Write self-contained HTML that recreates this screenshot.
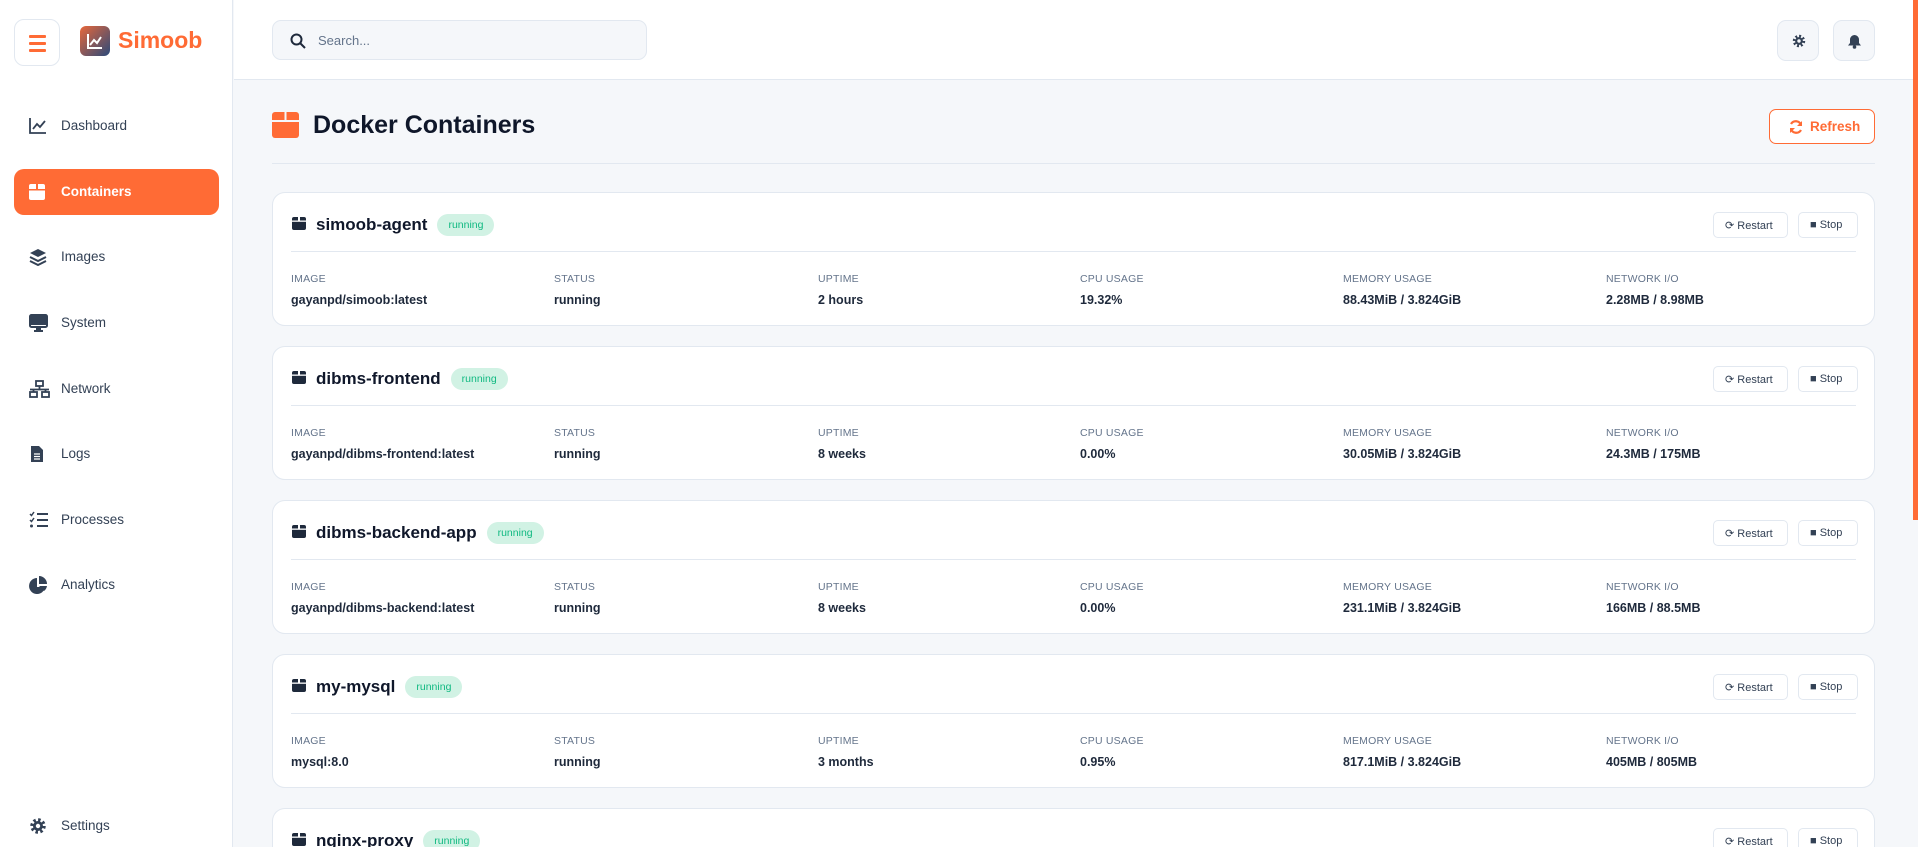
<!DOCTYPE html>
<html><head><meta charset="utf-8"><style>
*{box-sizing:border-box;margin:0;padding:0}
html{width:1918px;height:847px;overflow:hidden}
body{width:1918px;height:847px;overflow:hidden;background:#f5f7fa;font-family:"Liberation Sans",sans-serif;color:#1e293b;position:relative}
.side{position:absolute;left:0;top:0;width:233px;height:847px;background:#fff;border-right:1px solid #e2e8f0}
.ham{position:absolute;left:14px;top:19px;width:46px;height:47px;border:1px solid #e2e8f0;border-radius:10px;background:#fff}
.ham i{position:absolute;left:14px;width:17px;height:3px;background:#ff6b35;border-radius:1px}
.logo{position:absolute;left:80px;top:26px;width:30px;height:30px;border-radius:6px;background:linear-gradient(135deg,#e8673a,#2b4a7a)}
.brand{position:absolute;left:118px;top:27px;font-size:23px;font-weight:bold;color:#ff6b35}
.nav{position:absolute;left:14px;width:205px;height:46px;border-radius:10px;font-size:13.5px;color:#334155}
.nav svg{position:absolute;left:15px;top:14px}
.nav span{position:absolute;left:47px;top:15px}
.nav.act{background:#ff6b35;color:#fff;font-weight:bold}
.top{position:absolute;left:234px;top:0;right:5px;height:80px;background:#fff;border-bottom:1px solid #e2e8f0}
.search{position:absolute;left:272px;top:20px;width:375px;height:40px;border:1px solid #e2e8f0;border-radius:9px;background:#f5f7fa;font-size:13px;color:#64748b}
.ib{position:absolute;top:20px;width:42px;height:41px;border:1px solid #e2e8f0;border-radius:9px;background:#f5f7fa}
.bar{position:absolute;right:0;top:0;width:5px;height:520px;background:#ff6b35}
h1{position:absolute;left:313px;top:111px;font-size:25px;font-weight:bold;color:#0f172a}
.refresh{position:absolute;left:1769px;top:109px;width:106px;height:35px;border:1px solid #ff6b35;border-radius:7px;color:#ff6b35;font-size:13.5px;font-weight:bold;background:#fff}
.hr{position:absolute;left:272px;width:1603px;top:163px;height:1px;background:#e2e8f0}
.card{position:absolute;left:272px;width:1603px;height:134px;background:#fff;border:1px solid #e2e8f0;border-radius:13px}
.card .ci{position:absolute;left:19px;top:23px}
.card .nm{position:absolute;left:43px;top:21px;font-size:17px;font-weight:bold;color:#0f172a}
.badge{display:inline-block;margin-left:10px;background:#d1f2e4;color:#10b981;font-size:10.5px;font-weight:normal;padding:5px 11px;border-radius:12px;vertical-align:2px}
.btn{position:absolute;top:19px;height:26px;border:1px solid #e2e8f0;border-radius:5px;font-size:11px;color:#334155;background:#fff;padding:6px 0 0 11px}
.card .dv{position:absolute;left:18px;right:18px;top:58px;height:1px;background:#e2e8f0}
.col{position:absolute;top:80px}
.col .l{font-size:10.5px;color:#64748b;letter-spacing:.2px}
.col .v{font-size:12.5px;font-weight:bold;color:#1e293b;margin-top:8px}
</style></head><body>
<div class="side">
 <div class="ham"><i style="top:15px"></i><i style="top:22px"></i><i style="top:29px"></i></div>
 <div class="logo"><svg width="30" height="30" viewBox="0 0 30 30"><path d="M8 8v14h14" fill="none" stroke="#fff" stroke-width="2"/><path d="M10 19l4-5 3 3 4-6" fill="none" stroke="#fff" stroke-width="2"/></svg></div>
 <div class="brand">Simoob</div>
 <div class="nav" style="top:103px"><svg width="18" height="17" viewBox="0 0 18 17"><path d="M1 1v15h16" fill="none" stroke="#334155" stroke-width="1.8"/><path d="M4 12l4-5 3 3 5-6" fill="none" stroke="#334155" stroke-width="1.8"/></svg><span>Dashboard</span></div>
 <div class="nav act" style="top:169px"><svg width="16" height="18" viewBox="0 0 16 18"><rect x="0" y="1" width="16" height="16" rx="2" fill="#fff"/><rect x="7" y="0" width="2" height="7" fill="#ff6b35"/><rect x="0" y="6" width="16" height="1.5" fill="#ff6b35"/></svg><span>Containers</span></div>
 <div class="nav" style="top:234px"><svg width="18" height="18" viewBox="0 0 18 18"><path d="M9 1l8 4-8 4-8-4z" fill="#334155"/><path d="M1 9l8 4 8-4M1 13l8 4 8-4" fill="none" stroke="#334155" stroke-width="2"/></svg><span>Images</span></div>
 <div class="nav" style="top:300px"><svg width="19" height="18" viewBox="0 0 19 18"><rect x="1" y="1" width="17" height="12" rx="1.5" fill="none" stroke="#334155" stroke-width="2"/><rect x="2" y="2" width="15" height="9" fill="#334155"/><rect x="7" y="14" width="5" height="2" fill="#334155"/><rect x="5" y="16" width="9" height="2" fill="#334155"/></svg><span>System</span></div>
 <div class="nav" style="top:366px"><svg width="21" height="18" viewBox="0 0 21 18"><g fill="none" stroke="#334155" stroke-width="1.8"><rect x="7" y="1" width="7" height="5"/><rect x="1" y="12" width="7" height="5"/><rect x="13" y="12" width="7" height="5"/><path d="M10.5 6v3M1 9.5h19M4.5 9.5v2.5M16.5 9.5v2.5"/></g></svg><span>Network</span></div>
 <div class="nav" style="top:431px"><svg width="16" height="18" viewBox="0 0 16 18"><path d="M2 1h8l4 4v12H2z" fill="#334155"/><path d="M5 9h6M5 11.5h6M5 14h6" stroke="#fff" stroke-width="1.2"/></svg><span>Logs</span></div>
 <div class="nav" style="top:497px"><svg width="20" height="18" viewBox="0 0 20 18"><path d="M1 3l1.5 1.5L5 1M1 9l1.5 1.5L5 7" fill="none" stroke="#334155" stroke-width="1.5"/><circle cx="2.5" cy="15" r="1.5" fill="#334155"/><path d="M8 3h11M8 9h11M8 15h11" stroke="#334155" stroke-width="2"/></svg><span>Processes</span></div>
 <div class="nav" style="top:562px"><svg width="19" height="18" viewBox="0 0 19 18"><path d="M8 2a8 8 0 1 0 8 9H8z" fill="#334155"/><path d="M10 0a8 8 0 0 1 8 8h-8z" fill="#334155"/><path d="M10 10h8a8 8 0 0 1-3 5z" fill="#334155"/></svg><span>Analytics</span></div>
 <div class="nav" style="top:803px"><svg width="18" height="18" viewBox="0 0 18 18"><circle cx="9" cy="9" r="6" fill="none" stroke="#334155" stroke-width="3.5" stroke-dasharray="2.4 2.3"/><circle cx="9" cy="9" r="5" fill="#334155"/><circle cx="9" cy="9" r="2.2" fill="#fff"/></svg><span>Settings</span></div>
</div>
<div class="top"></div>
<div class="search"><svg style="position:absolute;left:17px;top:12px" width="16" height="16" viewBox="0 0 16 16"><circle cx="6.5" cy="6.5" r="5" fill="none" stroke="#1e293b" stroke-width="2"/><path d="M10 10l5 5" stroke="#1e293b" stroke-width="2"/></svg><span style="position:absolute;left:45px;top:12px">Search...</span></div>
<div class="ib" style="left:1777px"><svg style="position:absolute;left:14px;top:13px" width="14" height="14" viewBox="0 0 18 18"><circle cx="9" cy="9" r="6" fill="none" stroke="#334155" stroke-width="4" stroke-dasharray="2.4 2.3"/><circle cx="9" cy="9" r="5" fill="#334155"/><circle cx="9" cy="9" r="2.2" fill="#f5f7fa"/></svg></div>
<div class="ib" style="left:1833px"><svg style="position:absolute;left:14px;top:13px" width="13" height="15" viewBox="0 0 13 15"><path d="M6.5 1a4.5 4.5 0 0 0-4.5 4.5V9L0 11.5h13L11 9V5.5A4.5 4.5 0 0 0 6.5 1z" fill="#334155"/><circle cx="6.5" cy="13" r="1.8" fill="#334155"/></svg></div>
<div class="bar"></div>
<svg style="position:absolute;left:272px;top:112px" width="27" height="26" viewBox="0 0 27 26"><rect x="0" y="0" width="27" height="26" rx="3" fill="#ff6b35"/><rect x="12.5" y="0" width="2" height="9" fill="#f5f7fa"/><rect x="0" y="8" width="27" height="2" fill="#f5f7fa"/></svg>
<h1>Docker Containers</h1>
<div class="refresh"><svg style="position:absolute;left:19px;top:10px" width="14" height="14" viewBox="0 0 14 14"><path d="M12 5A5.5 5.5 0 0 0 2 4M2 9a5.5 5.5 0 0 0 10 1" fill="none" stroke="#ff6b35" stroke-width="2.2"/><path d="M13 1v5H8zM1 13V8h5z" fill="#ff6b35"/></svg><span style="position:absolute;left:40px;top:9px">Refresh</span></div>
<div class="hr"></div>

<div class="card" style="top:192px">
<svg class="ci" width="14" height="14" viewBox="0 0 14 14"><rect y="1" width="14" height="13" rx="2" fill="#1e293b"/><rect x="6" width="2" height="5" fill="#fff"/><rect y="4.5" width="14" height="1.3" fill="#fff"/></svg>
<div class="nm">simoob-agent<span class="badge">running</span></div>
<div class="btn" style="left:1440px;width:75px">&#10227; Restart</div><div class="btn" style="left:1525px;width:60px">&#9632; Stop</div>
<div class="dv"></div>
<div class="col" style="left:18px"><div class="l">IMAGE</div><div class="v">gayanpd/simoob:latest</div></div>
<div class="col" style="left:281px"><div class="l">STATUS</div><div class="v">running</div></div>
<div class="col" style="left:545px"><div class="l">UPTIME</div><div class="v">2 hours</div></div>
<div class="col" style="left:807px"><div class="l">CPU USAGE</div><div class="v">19.32%</div></div>
<div class="col" style="left:1070px"><div class="l">MEMORY USAGE</div><div class="v">88.43MiB / 3.824GiB</div></div>
<div class="col" style="left:1333px"><div class="l">NETWORK I/O</div><div class="v">2.28MB / 8.98MB</div></div>
</div>

<div class="card" style="top:346px">
<svg class="ci" width="14" height="14" viewBox="0 0 14 14"><rect y="1" width="14" height="13" rx="2" fill="#1e293b"/><rect x="6" width="2" height="5" fill="#fff"/><rect y="4.5" width="14" height="1.3" fill="#fff"/></svg>
<div class="nm">dibms-frontend<span class="badge">running</span></div>
<div class="btn" style="left:1440px;width:75px">&#10227; Restart</div><div class="btn" style="left:1525px;width:60px">&#9632; Stop</div>
<div class="dv"></div>
<div class="col" style="left:18px"><div class="l">IMAGE</div><div class="v">gayanpd/dibms-frontend:latest</div></div>
<div class="col" style="left:281px"><div class="l">STATUS</div><div class="v">running</div></div>
<div class="col" style="left:545px"><div class="l">UPTIME</div><div class="v">8 weeks</div></div>
<div class="col" style="left:807px"><div class="l">CPU USAGE</div><div class="v">0.00%</div></div>
<div class="col" style="left:1070px"><div class="l">MEMORY USAGE</div><div class="v">30.05MiB / 3.824GiB</div></div>
<div class="col" style="left:1333px"><div class="l">NETWORK I/O</div><div class="v">24.3MB / 175MB</div></div>
</div>

<div class="card" style="top:500px">
<svg class="ci" width="14" height="14" viewBox="0 0 14 14"><rect y="1" width="14" height="13" rx="2" fill="#1e293b"/><rect x="6" width="2" height="5" fill="#fff"/><rect y="4.5" width="14" height="1.3" fill="#fff"/></svg>
<div class="nm">dibms-backend-app<span class="badge">running</span></div>
<div class="btn" style="left:1440px;width:75px">&#10227; Restart</div><div class="btn" style="left:1525px;width:60px">&#9632; Stop</div>
<div class="dv"></div>
<div class="col" style="left:18px"><div class="l">IMAGE</div><div class="v">gayanpd/dibms-backend:latest</div></div>
<div class="col" style="left:281px"><div class="l">STATUS</div><div class="v">running</div></div>
<div class="col" style="left:545px"><div class="l">UPTIME</div><div class="v">8 weeks</div></div>
<div class="col" style="left:807px"><div class="l">CPU USAGE</div><div class="v">0.00%</div></div>
<div class="col" style="left:1070px"><div class="l">MEMORY USAGE</div><div class="v">231.1MiB / 3.824GiB</div></div>
<div class="col" style="left:1333px"><div class="l">NETWORK I/O</div><div class="v">166MB / 88.5MB</div></div>
</div>

<div class="card" style="top:654px">
<svg class="ci" width="14" height="14" viewBox="0 0 14 14"><rect y="1" width="14" height="13" rx="2" fill="#1e293b"/><rect x="6" width="2" height="5" fill="#fff"/><rect y="4.5" width="14" height="1.3" fill="#fff"/></svg>
<div class="nm">my-mysql<span class="badge">running</span></div>
<div class="btn" style="left:1440px;width:75px">&#10227; Restart</div><div class="btn" style="left:1525px;width:60px">&#9632; Stop</div>
<div class="dv"></div>
<div class="col" style="left:18px"><div class="l">IMAGE</div><div class="v">mysql:8.0</div></div>
<div class="col" style="left:281px"><div class="l">STATUS</div><div class="v">running</div></div>
<div class="col" style="left:545px"><div class="l">UPTIME</div><div class="v">3 months</div></div>
<div class="col" style="left:807px"><div class="l">CPU USAGE</div><div class="v">0.95%</div></div>
<div class="col" style="left:1070px"><div class="l">MEMORY USAGE</div><div class="v">817.1MiB / 3.824GiB</div></div>
<div class="col" style="left:1333px"><div class="l">NETWORK I/O</div><div class="v">405MB / 805MB</div></div>
</div>

<div class="card" style="top:808px;height:39px;border-bottom:none;border-radius:13px 13px 0 0">
<svg class="ci" width="14" height="14" viewBox="0 0 14 14"><rect y="1" width="14" height="13" rx="2" fill="#1e293b"/><rect x="6" width="2" height="5" fill="#fff"/><rect y="4.5" width="14" height="1.3" fill="#fff"/></svg>
<div class="nm">nginx-proxy<span class="badge">running</span></div>
<div class="btn" style="left:1440px;width:75px">&#10227; Restart</div><div class="btn" style="left:1525px;width:60px">&#9632; Stop</div>
</div>
</body></html>
